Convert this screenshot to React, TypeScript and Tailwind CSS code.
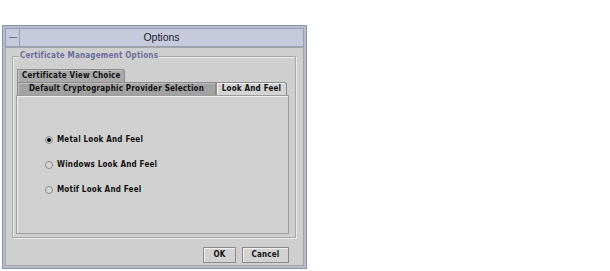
import React, { useState } from "react";

const font = { fontFamily: '"DejaVu Sans Condensed", "DejaVu Sans", "Liberation Sans", sans-serif' };

const options = ["Metal Look And Feel", "Windows Look And Feel", "Motif Look And Feel"];

const Radio: React.FC<{ on: boolean }> = ({ on }) => (
    <span className="w-[8px] h-[8px] rounded-full border border-[#8a8a8a] bg-[#d6d6d6] flex items-center justify-center">
        {on && <span className="w-[4px] h-[4px] rounded-full bg-black" />}
    </span>
);

export default function App() {
    const [choice, setChoice] = useState(0);

    return (
        <div className="w-[610px] h-[271px] bg-white pt-[25px] pl-[2px]" style={font}>
            <div className="w-[305px] h-[244px] border border-[#8e92a6] bg-[#b8bccc] p-[2px] flex flex-col">
                {/* title bar */}
                <div className="h-[19px] flex items-stretch bg-[#c6cadc] border border-[#9a9eb2]">
                    <div className="w-[14px] border-r border-[#9a9eb2] flex items-center justify-center">
                        <span className="w-[8px] h-[1px] bg-[#70748a]" />
                    </div>
                    <div className="flex-1 flex items-center justify-center text-[10.5px] text-[#202030]" style={{ fontFamily: '"Liberation Sans", sans-serif' }}>
                        Options
                    </div>
                </div>

                <div className="flex-1 bg-[#cfcfcf] border border-[#a4a4a4] flex flex-col pl-[6px] pr-[6px] pt-[4px] tracking-[0.2px]">
                    {/* group */}
                    <div className="relative mt-[4px] h-[182px] w-[284px] border border-[#a8a8a8] shadow-[inset_1px_1px_0_#ececec,1px_1px_0_#ececec] pl-[3px] pt-[12px]">
                        <span className="absolute -top-[7px] left-[6px] bg-[#cfcfcf] px-[1px] whitespace-nowrap text-[8px] font-bold leading-[12px] text-[#6c6c9e]">
                            Certificate Management Options
                        </span>

                        <div className="flex flex-col">
                            <div className="flex pl-[1px]">
                                <div className="h-[13px] pl-[4px] pr-[3px] whitespace-nowrap bg-[#a9a9a9] border border-[#8c8c8c] border-b-0 rounded-tr-[3px] shadow-[inset_1px_1px_0_#c4c4c4] text-[8px] font-bold leading-[12px] text-[#111]">
                                    Certificate View Choice
                                </div>
                            </div>
                            <div className="flex pl-[1px]">
                                <div className="h-[13px] w-[199px] whitespace-nowrap bg-[#a2a2a2] border border-[#8c8c8c] border-b-0 shadow-[inset_1px_1px_0_#bcbcbc] text-center text-[8px] font-bold leading-[12px] text-[#111]">
                                    Default Cryptographic Provider Selection
                                </div>
                                <div className="h-[13px] w-[71px] whitespace-nowrap bg-[#d4d4d4] border border-[#8c8c8c] border-b-0 rounded-tr-[3px] shadow-[inset_1px_1px_0_#f4f4f4] text-center text-[8px] font-bold leading-[12px] text-[#111]">
                                    Look And Feel
                                </div>
                            </div>
                            <div className="h-[139px] w-[273px] border border-[#9c9c9c] shadow-[inset_1px_1px_0_#f2f2f2] bg-[#d0d0d0] flex flex-col gap-[15px] pl-[28px] pt-[39px]">
                                {options.map((o, i) => (
                                    <div key={o} className="flex items-center gap-[4px] cursor-pointer" onClick={() => setChoice(i)}>
                                        <Radio on={choice === i} />
                                        <span className="whitespace-nowrap text-[8px] font-bold leading-[10px] text-[#111]">{o}</span>
                                    </div>
                                ))}
                            </div>
                        </div>
                    </div>

                    {/* buttons */}
                    <div className="flex justify-end gap-[6px] mt-[9px] pr-[8px]">
                        <button className="w-[33px] h-[16px] border border-[#8a8a8a] shadow-[inset_1px_1px_0_#f0f0f0] bg-[#d2d2d2] text-[8px] font-bold leading-[14px] text-[#111]">OK</button>
                        <button className="w-[47px] h-[16px] border border-[#8a8a8a] shadow-[inset_1px_1px_0_#f0f0f0] bg-[#d2d2d2] text-[8px] font-bold leading-[14px] text-[#111]">Cancel</button>
                    </div>
                </div>
            </div>
        </div>
    );
}
